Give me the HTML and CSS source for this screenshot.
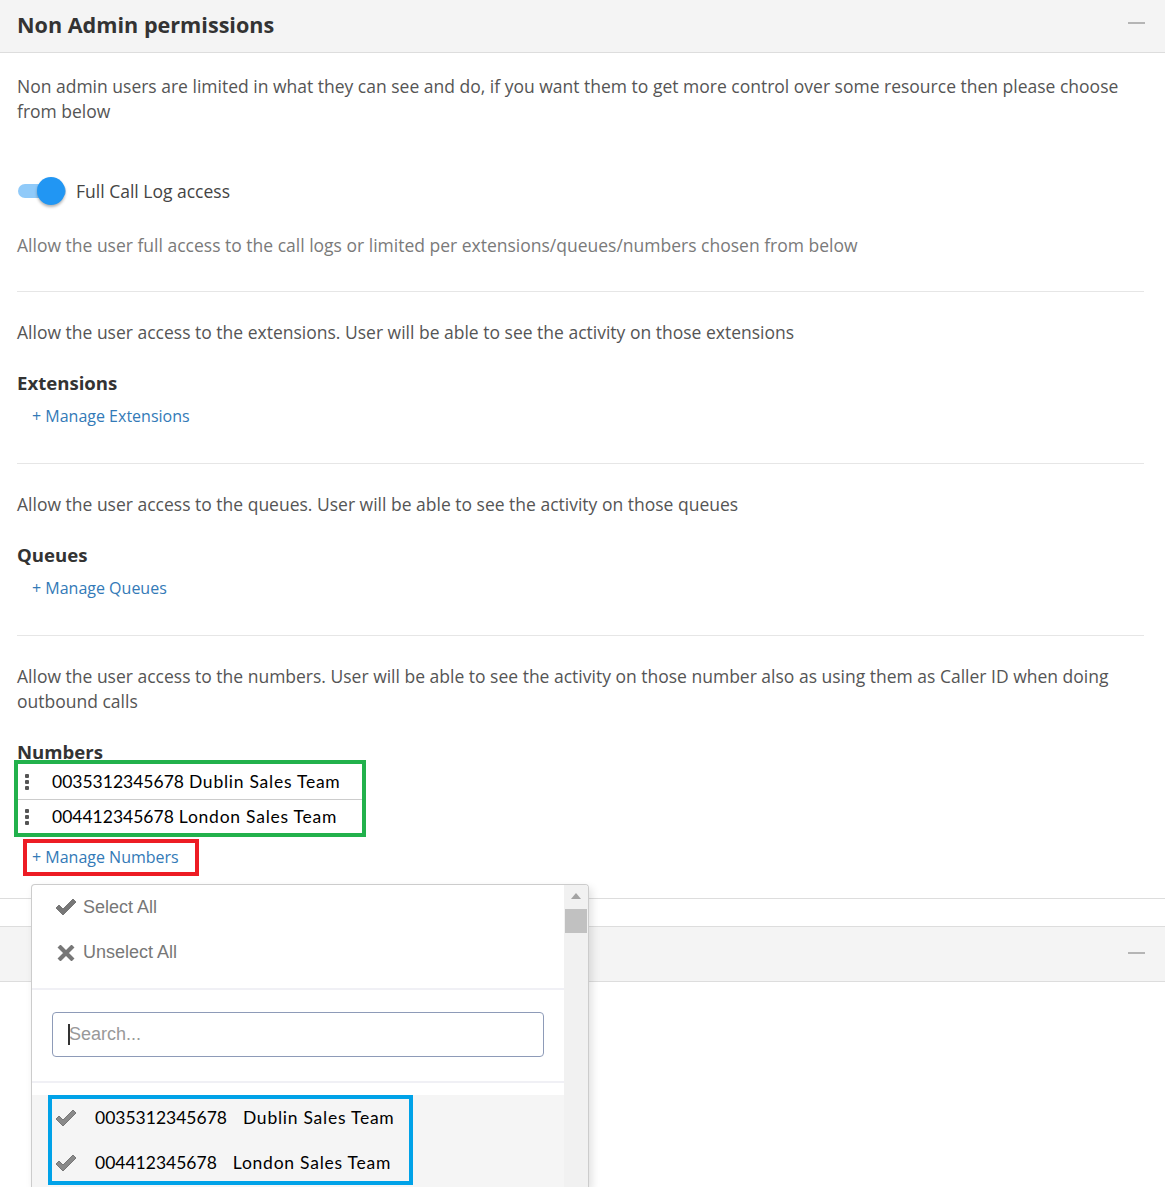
FILE: index.html
```html
<!DOCTYPE html>
<html lang="en">
<head>
  <meta charset="UTF-8">
  <meta name="viewport" content="width=device-width, initial-scale=1.0">
  <title>Non Admin permissions</title>
  <link rel="stylesheet" href="styles.css">
</head>
<body>
  <div class="panel">
    <div class="panel-heading">
      <h2>Non Admin permissions</h2>
      <span class="collapse-btn"></span>
    </div>
    <div class="panel-body">
      <div class="perm-intro">
        <p class="lead-text">Non admin users are limited in what they can see and do, if you want them to get more control over some resource then please choose from below</p>
        <label class="switch-row">
          <span class="switch"><span class="knob"></span></span>
          <span>Full Call Log access</span>
        </label>
        <p class="hint">Allow the user full access to the call logs or limited per extensions/queues/numbers chosen from below</p>
      </div>

      <div class="perm-section">
        <p>Allow the user access to the extensions. User will be able to see the activity on those extensions</p>
        <h3>Extensions</h3>
        <a class="manage-link" href="#">+ Manage Extensions</a>
      </div>

      <div class="perm-section">
        <p>Allow the user access to the queues. User will be able to see the activity on those queues</p>
        <h3>Queues</h3>
        <a class="manage-link" href="#">+ Manage Queues</a>
      </div>

      <div class="perm-section last">
        <p>Allow the user access to the numbers. User will be able to see the activity on those number also as using them as Caller ID when doing outbound calls</p>
        <h3>Numbers</h3>
        <ul class="picked-list">
          <li><span class="handle"><i></i><i></i><i></i></span><span class="num">0035312345678</span><span class="name">Dublin Sales Team</span></li>
          <li><span class="handle"><i></i><i></i><i></i></span><span class="num">004412345678</span><span class="name">London Sales Team</span></li>
        </ul>
        <div class="manage-wrap">
          <a class="manage-link boxed" href="#">+ Manage Numbers</a>

          <div class="ms-drop">
            <div class="ms-main">
              <div class="ms-actions">
                <div class="ms-action">
                  <svg class="ico" viewBox="0 0 20 16"><polygon points="0,9 3,6 7,10 17,0 20,3 7,16"/></svg>
                  Select All
                </div>
                <div class="ms-action">
                  <svg class="ico" viewBox="0 0 20 16"><path d="M3 1 L17 15 M17 1 L3 15" stroke-width="4.2" stroke-linecap="butt"/></svg>
                  Unselect All
                </div>
              </div>
              <div class="ms-search">
                <input type="text" placeholder="Search...">
                <span class="caret"></span>
              </div>
              <div class="ms-options">
                <div class="ms-selected">
                  <div class="ms-option">
                    <svg class="ico" viewBox="0 0 20 16"><polygon points="0,9 3,6 7,10 17,0 20,3 7,16"/></svg>
                    <span class="num">0035312345678</span><span class="name">Dublin Sales Team</span>
                  </div>
                  <div class="ms-option">
                    <svg class="ico" viewBox="0 0 20 16"><polygon points="0,9 3,6 7,10 17,0 20,3 7,16"/></svg>
                    <span class="num">004412345678</span><span class="name">London Sales Team</span>
                  </div>
                </div>
              </div>
            </div>
            <div class="ms-scroll">
              <span class="arrow"></span>
              <span class="thumb"></span>
            </div>
          </div>
        </div>
      </div>
    </div>
  </div>

  <div class="panel second">
    <div class="panel-heading">
      <h2></h2>
      <span class="collapse-btn"></span>
    </div>
    <div class="panel-body empty"></div>
  </div>
</body>
</html>
```

FILE: styles.css
```css
:root {
  --text: #555555;
  --muted: #7a7a7a;
  --heading: #333333;
  --link: #337ab7;
  --line: #e6e6e6;
  --panel-head: #f4f4f4;
  --panel-border: #dddddd;
  --switch-on: #2196f3;
  --switch-track: #90caf9;
}

* {
  margin: 0;
  padding: 0;
  box-sizing: border-box;
}

html, body {
  height: 1187px;
  overflow: hidden;
}

body {
  font-family: 'Open Sans', sans-serif;
  font-size: 17.5px;
  line-height: 25px;
  color: var(--text);
  background: #ffffff;
}

/* Panels */
.panel {
  border-bottom: 1px solid var(--panel-border);
}

.panel.second {
  margin-top: 27px;
  border-top: 1px solid var(--panel-border);
  border-bottom: none;
}

.panel-heading {
  height: 53px;
  display: flex;
  align-items: center;
  justify-content: space-between;
  padding: 0 20px 0 17px;
  background: var(--panel-head);
  border-bottom: 1px solid var(--panel-border);
}

.panel.second .panel-heading {
  height: 55px;
}

.panel-heading h2 {
  font-size: 21.6px;
  font-weight: 700;
  color: var(--heading);
  margin-top: -3px;
}

.collapse-btn {
  width: 17px;
  height: 2px;
  background: #b5b5b5;
  margin-top: -6px;
}

.panel.second .collapse-btn {
  margin-top: -2px;
}

.panel-body {
  padding: 0 21px 0 17px;
}

.panel-body.empty {
  height: 205px;
}

/* Intro */
.perm-intro {
  padding: 21px 0 33px;
  border-bottom: 1px solid var(--line);
}

.switch-row {
  display: flex;
  align-items: center;
  gap: 10px;
  height: 30px;
  margin-top: 52px;
  color: #444;
}

.switch {
  position: relative;
  width: 48px;
  height: 14px;
  margin-left: 1px;
  border-radius: 7px;
  background: var(--switch-track);
}

.switch .knob {
  position: absolute;
  right: 1px;
  top: -7px;
  width: 28px;
  height: 28px;
  border-radius: 50%;
  background: var(--switch-on);
  box-shadow: 0 2px 3px rgba(0, 0, 0, 0.3);
}

.hint {
  margin-top: 27px;
  color: var(--muted);
}

/* Sections */
.perm-section {
  padding: 28px 0 35px;
  border-bottom: 1px solid var(--line);
}

.perm-section.last {
  border-bottom: none;
  padding-bottom: 26px;
}

.perm-section h3 {
  margin-top: 25px;
  font-size: 18.6px;
  font-weight: 700;
  color: var(--heading);
}

.manage-link {
  display: inline-block;
  margin-top: 9px;
  margin-left: 10px;
  padding: 0 5px;
  font-size: 16px;
  line-height: 24px;
  color: var(--link);
  text-decoration: none;
}

/* Chosen numbers */
.picked-list {
  list-style: none;
  width: 344px;
  margin-left: 1px;
  outline: 4px solid #22b14c;
  font-family: Lato, sans-serif;
  font-size: 17.5px;
  color: #000;
}

.picked-list li {
  display: flex;
  align-items: center;
  height: 35px;
}

.picked-list li + li {
  height: 34px;
  border-top: 1px solid #cccccc;
}

.picked-list .num {
  margin-right: 5px;
}

.name {
  letter-spacing: 0.75px;
}

.handle {
  display: flex;
  flex-direction: column;
  gap: 2px;
  width: 34px;
  padding-left: 7px;
}

.handle i {
  width: 4px;
  height: 4px;
  border-radius: 1px;
  background: #555;
}

.manage-wrap {
  position: relative;
  margin-top: 10px;
}

.manage-link.boxed {
  margin-top: 0;
  width: 168px;
  height: 29px;
  line-height: 28px;
  outline: 4px solid #ed1c24;
}

/* Multi-select dropdown */
.ms-drop {
  position: absolute;
  top: 41px;
  left: 14px;
  width: 558px;
  height: 303px;
  display: flex;
  background: #ffffff;
  border: 1px solid #cccccc;
  border-bottom: none;
  border-radius: 4px 4px 0 0;
  box-shadow: 3px 4px 8px rgba(0, 0, 0, 0.12);
  font-family: 'Liberation Sans', Arial, sans-serif;
  overflow: hidden;
  z-index: 5;
}

.ms-main {
  flex: 1;
}

.ms-actions {
  padding-bottom: 14px;
  border-bottom: 2px solid #f0f0f5;
}

.ms-action {
  display: flex;
  align-items: center;
  gap: 7px;
  height: 44px;
  padding-left: 24px;
  font-size: 18px;
  color: #777777;
}

.ms-action + .ms-action {
  height: 45px;
  padding-top: 2px;
}

.ico {
  width: 20px;
  height: 16px;
  fill: #777777;
  stroke: #777777;
}

.ms-search {
  position: relative;
  padding: 22px 20px 24px;
  border-bottom: 2px solid #f0f0f5;
}

.ms-search input {
  width: 100%;
  height: 45px;
  padding: 0 16px;
  border: 1px solid #8e9bb8;
  border-radius: 4px;
  font-family: 'Liberation Sans', Arial, sans-serif;
  font-size: 18px;
  color: #555;
  outline: none;
}

.ms-search input::placeholder {
  color: #999999;
}

.ms-search .caret {
  position: absolute;
  left: 36px;
  top: 34px;
  width: 2px;
  height: 21px;
  background: #333;
}

.ms-options {
  margin-top: 12px;
  height: 200px;
  background: #f5f5f5;
}

.ms-selected {
  width: 365px;
  margin-left: 16px;
  outline: 4px solid #00a2e8;
  outline-offset: -4px;
}

.ms-option {
  display: flex;
  align-items: center;
  height: 45px;
  padding-left: 8px;
  font-family: Lato, sans-serif;
  font-size: 17.5px;
  color: #000;
}

.ms-option .ico {
  fill: #8a8a8a;
  margin-right: 19px;
}

.ms-option .num {
  margin-right: 16px;
}

.ms-scroll {
  position: relative;
  width: 24px;
  background: #f1f1f1;
}

.ms-scroll .arrow {
  position: absolute;
  top: 8px;
  left: 7px;
  width: 0;
  height: 0;
  border-left: 5px solid transparent;
  border-right: 5px solid transparent;
  border-bottom: 6px solid #a3a3a3;
}

.ms-scroll .thumb {
  position: absolute;
  top: 24px;
  left: 1px;
  width: 22px;
  height: 24px;
  background: #c1c1c1;
}
```
